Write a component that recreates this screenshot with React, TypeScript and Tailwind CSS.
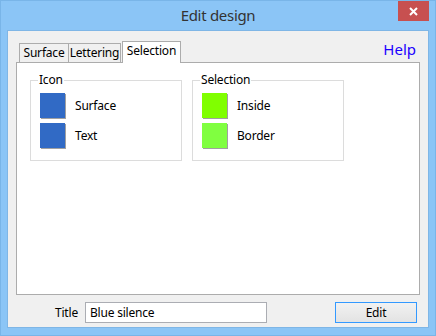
import { memo } from "react";

type Swatch = {
  color: string;
  label: string;
};

const iconSwatches: Swatch[] = [
  { color: "#316AC5", label: "Surface" },
  { color: "#316AC5", label: "Text" },
];

const selectionSwatches: Swatch[] = [
  { color: "#80FF00", label: "Inside" },
  { color: "#80FF40", label: "Border" },
];

const GroupBox = ({ title, items }: { title: string; items: Swatch[] }) => {
  return (
    <div className="relative w-[152px] h-[81px] border border-[#DCDCDC]">
      <span className="absolute left-[7px] top-[-9px] bg-white px-[1px] leading-[16px]">
        {title}
      </span>
      <div className="flex flex-col gap-[5px] pl-[9px] pt-[12px]">
        {items.map((item) => (
          <div key={item.label} className="flex items-center">
            <div
              className="w-[25px] h-[25px] shadow-[1px_1px_0_#A0A0A0]"
              style={{ backgroundColor: item.color }}
            />
            <span className="ml-[10px] leading-[16px]">{item.label}</span>
          </div>
        ))}
      </div>
    </div>
  );
};

const App = () => {
  return (
    <div
      className="w-[436px] h-[336px] bg-[#8BC5F6] border border-[#79B5E8] flex flex-col text-[12px] tracking-[-0.2px] text-black overflow-hidden"
      style={{ fontFamily: '"Noto Sans", "Open Sans", sans-serif' }}
    >
      {/* title bar */}
      <div className="relative h-[29px] flex items-center justify-center shrink-0">
        <span className="text-[15px] text-[#333] tracking-[-0.3px]">Edit design</span>
        <div className="absolute right-[6px] top-0 w-[31px] h-[20px] bg-[#C75050] flex items-center justify-center">
          <svg width="9" height="9" viewBox="0 0 9 9">
            <path d="M1 1L8 8M8 1L1 8" stroke="white" strokeWidth="2" />
          </svg>
        </div>
      </div>

      {/* client */}
      <div className="mx-[6px] h-[298px] bg-[#F0F0F0] border border-[#7FB6E6]">
        <div className="flex items-end justify-between pl-[11px] pr-[12px] pt-[9px] h-[31px]">
          <div className="flex items-end">
            <div className="w-[50px] h-[19px] border border-[#ACACAC] border-b-0 bg-[#F0F0F0] leading-[17px] text-center">
              Surface
            </div>
            <div className="w-[52px] h-[19px] border border-[#ACACAC] border-b-0 border-l-0 bg-[#F0F0F0] leading-[17px] text-center">
              Lettering
            </div>
            <div className="relative w-[59px] h-[22px] ml-[1px] mb-[-1px] z-10 border border-[#ACACAC] border-b-0 bg-white leading-[18px] text-center">
              Selection
            </div>
          </div>
          <span className="text-[15px] text-[#1B00FF] leading-[20px] mb-[3px] tracking-normal">Help</span>
        </div>

        <div className="mx-[8px] h-[233px] bg-white border border-[#ACACAC] flex gap-[10px] pl-[13px] pt-[17px]">
          <GroupBox title="Icon" items={iconSwatches} />
          <GroupBox title="Selection" items={selectionSwatches} />
        </div>

        <div className="flex items-center pl-[47px] pt-[7px]">
          <span className="leading-[16px]">Title</span>
          <div className="ml-[7px] w-[182px] h-[21px] bg-white border border-[#ABADB3] px-[4px] leading-[19px]">
            Blue silence
          </div>
          <div className="ml-[68px] w-[82px] h-[21px] border border-[#3399FF] bg-gradient-to-b from-[#F2F2F2] to-[#E3E3E3] flex items-center justify-center">
            Edit
          </div>
        </div>
      </div>
    </div>
  );
};

export default memo(App);
